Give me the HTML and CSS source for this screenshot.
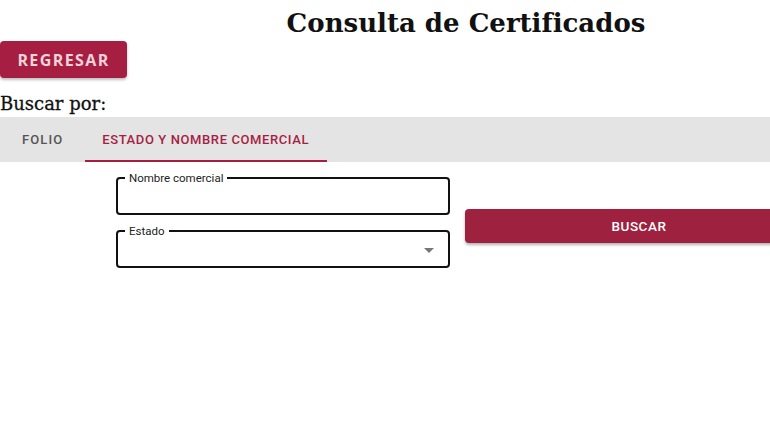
FILE: index.html
```html
<!DOCTYPE html>
<html lang="es">
<head>
<meta charset="utf-8">
<title>Consulta de Certificados</title>
<link rel="stylesheet" href="styles.css">
</head>
<body>
<div class="page">
  <h1 class="title">Consulta de Certificados</h1>
  <div class="back-row"><button class="btn-back">REGRESAR</button></div>
  <h2 class="subtitle">Buscar por:</h2>
  <div class="tabs">
    <div class="tab">FOLIO</div>
    <div class="tab active">ESTADO Y NOMBRE COMERCIAL</div>
  </div>
  <div class="form">
    <div class="fields">
      <div class="field">
        <span class="label">Nombre comercial</span>
      </div>
      <div class="field">
        <span class="label">Estado</span>
        <span class="arrow"></span>
      </div>
    </div>
    <button class="btn-search">BUSCAR</button>
  </div>
</div>
</body>
</html>
```

FILE: styles.css
```css
html, body {
  margin: 0;
  padding: 0;
  background: #fff;
  overflow: hidden;
}
.page {
  width: 932px;
  font-family: "DejaVu Serif", serif;
}
.title {
  margin: 0;
  padding-top: 6px;
  height: 35px;
  text-align: center;
  font-family: "DejaVu Serif", serif;
  font-weight: bold;
  font-size: 26px;
  line-height: 35px;
  color: #111;
}
.back-row {
  display: flex;
}
.btn-back {
  width: 127px;
  height: 37px;
  border: none;
  border-radius: 4px;
  background: #a61f43;
  color: #f1d3da;
  font-family: "Open Sans", sans-serif;
  font-weight: 700;
  font-size: 16px;
  letter-spacing: 1.4px;
  box-shadow: 0 2px 3px rgba(0,0,0,0.25);
  padding: 0;
}
.subtitle {
  margin: 0;
  margin-top: 12px;
  font-family: "DejaVu Serif", serif;
  font-weight: normal;
  font-size: 18px;
  line-height: 27px;
  height: 27px;
  color: #111;
  -webkit-text-stroke: 0.3px #111;
}
.tabs {
  display: flex;
  background: #e4e4e4;
  height: 45px;
}
.tab {
  font-family: Roboto, sans-serif;
  font-weight: 500;
  font-size: 13px;
  letter-spacing: 1.1px;
  color: #555;
  display: flex;
  align-items: center;
  padding: 0 22px;
  border-bottom: 2px solid transparent;
  padding-top: 2px;
}
.tab.active {
  color: #a61f43;
  border-bottom-color: #a61f43;
  letter-spacing: 0.6px;
  padding: 2px 18px 0 17px;
}
.form {
  display: flex;
  align-items: center;
  padding-left: 116px;
  gap: 15px;
  margin-top: 15px;
}
.fields {
  display: flex;
  flex-direction: column;
  gap: 15px;
  width: 334px;
}
.field {
  position: relative;
  height: 38px;
  border: 2px solid #111;
  border-radius: 4px;
  box-sizing: border-box;
}
.label {
  position: absolute;
  top: -8px;
  left: 7px;
  background: #fff;
  padding: 0 4px;
  font-family: Roboto, sans-serif;
  font-size: 11.5px;
  line-height: 14px;
  color: #222;
}
.arrow {
  position: absolute;
  right: 14px;
  top: 16px;
  width: 0;
  height: 0;
  border-left: 5px solid transparent;
  border-right: 5px solid transparent;
  border-top: 5px solid #777;
}
.btn-search {
  width: 348px;
  height: 34px;
  border: none;
  border-radius: 4px;
  background: #9e2140;
  color: #fff;
  font-family: Roboto, sans-serif;
  font-weight: 500;
  font-size: 13.5px;
  letter-spacing: 0.5px;
  box-shadow: 0 2px 3px rgba(0,0,0,0.3);
  margin-top: 6px;
}
```
